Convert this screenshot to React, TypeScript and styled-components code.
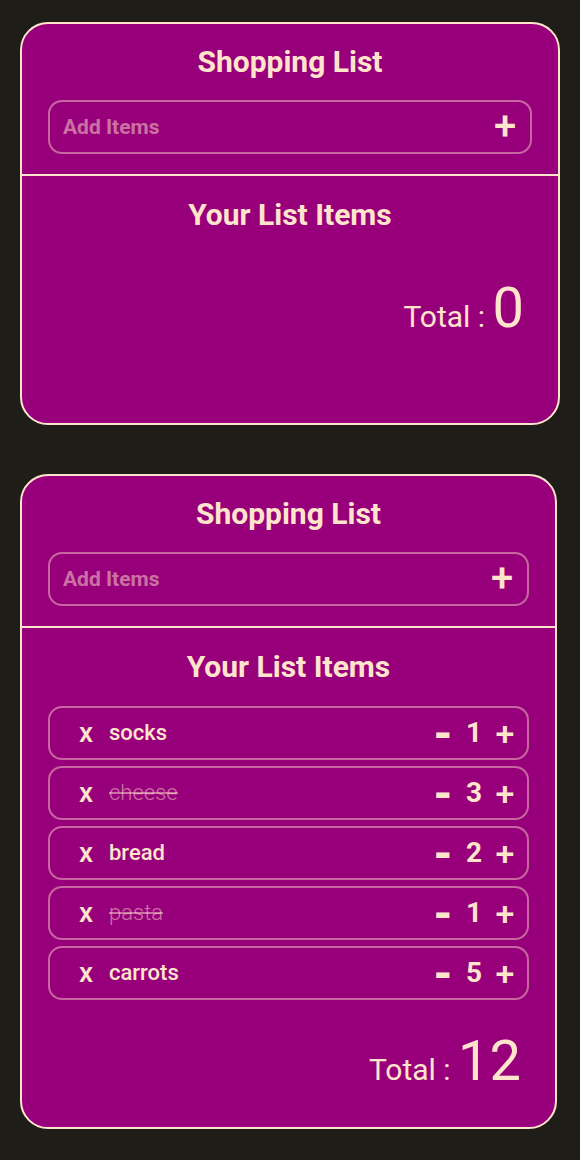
import React, { useState } from "react";
import styled, { createGlobalStyle } from "styled-components";

const cream = "#ffe4cc";
const creamFaded = "rgba(255, 228, 204, 0.5)";
const outline = "rgba(255, 228, 204, 0.45)";
const purple = "#98007b";

const GlobalStyle = createGlobalStyle`
  * { box-sizing: border-box; }
  body {
    margin: 0;
    background: #1e1d18;
    color: ${cream};
    font-family: Roboto, "Liberation Sans", sans-serif;
  }
`;

const Page = styled.main`
  display: flex;
  flex-direction: column;
  gap: 49px;
  padding: 22px 20px 30px;
`;

const Card = styled.section<{ $inset?: boolean }>`
  display: flex;
  flex-direction: column;
  min-height: 403px;
  margin-right: ${(p) => (p.$inset ? "3px" : "0")};
  border: 2px solid ${cream};
  border-radius: 28px;
  background: ${purple};
  overflow: hidden;
`;

const CardHeader = styled.header`
  padding: 20px 26px;
  border-bottom: 2px solid ${cream};
`;

const CardBody = styled.div`
  padding: 21px 26px 24px;
`;

const Title = styled.h2`
  margin: 0;
  font-size: 30px;
  line-height: 36px;
  font-weight: 700;
  text-align: center;
`;

const AddForm = styled.form`
  display: flex;
  align-items: center;
  height: 54px;
  margin-top: 20px;
  padding: 0 10px 0 13px;
  border: 2px solid ${outline};
  border-radius: 14px;
`;

const AddInput = styled.input`
  flex: 1;
  min-width: 0;
  padding: 0;
  border: 0;
  outline: 0;
  background: transparent;
  color: ${cream};
  font: 700 21px/30px Roboto, "Liberation Sans", sans-serif;
  &::placeholder {
    color: ${creamFaded};
    opacity: 1;
  }
`;

const GlyphButton = styled.button<{ $size: number; $weight: number }>`
  width: 30px;
  height: 40px;
  padding: 0;
  border: 0;
  background: transparent;
  color: ${cream};
  font-family: inherit;
  font-size: ${(p) => p.$size}px;
  line-height: 38px;
  font-weight: ${(p) => p.$weight};
  text-align: center;
  cursor: pointer;
`;

const List = styled.ul`
  display: flex;
  flex-direction: column;
  gap: 6px;
  margin: 21px 0 0;
  padding: 0;
  list-style: none;
`;

const Row = styled.li`
  display: flex;
  align-items: center;
  height: 54px;
  padding: 0 7px 0 21px;
  border: 2px solid ${outline};
  border-radius: 14px;
`;

const ItemName = styled.span<{ $done: boolean }>`
  flex: 1;
  margin-left: 8px;
  font-size: 22px;
  line-height: 30px;
  font-weight: ${(p) => (p.$done ? 300 : 500)};
  color: ${(p) => (p.$done ? creamFaded : cream)};
  text-decoration: ${(p) => (p.$done ? "line-through" : "none")};
`;

const Quantity = styled.span`
  width: 32px;
  font-size: 28px;
  line-height: 40px;
  font-weight: 700;
  text-align: center;
`;

const Total = styled.p<{ $spaced: boolean }>`
  margin: ${(p) => (p.$spaced ? "42px" : "28px")} 8px 0;
  font-size: 30px;
  line-height: 66px;
  text-align: right;
`;

const TotalValue = styled.span`
  font-size: 56px;
`;

type Item = { name: string; count: number; done: boolean };

function ShoppingList({ initial, inset }: { initial: Item[]; inset?: boolean }) {
  const [items, setItems] = useState(initial);
  const [draft, setDraft] = useState("");
  const total = items.reduce((sum, item) => sum + item.count, 0);

  const change = (index: number, step: number) =>
    setItems(
      items.map((item, i) =>
        i === index ? { ...item, count: Math.max(0, item.count + step) } : item
      )
    );

  const add = (event: React.FormEvent) => {
    event.preventDefault();
    if (!draft.trim()) return;
    setItems([...items, { name: draft.trim(), count: 1, done: false }]);
    setDraft("");
  };

  return (
    <Card $inset={inset}>
      <CardHeader>
        <Title>Shopping List</Title>
        <AddForm onSubmit={add}>
          <AddInput
            aria-label="Add Items"
            placeholder="Add Items"
            value={draft}
            onChange={(e) => setDraft(e.target.value)}
          />
          <GlyphButton type="submit" aria-label="Add" $size={40} $weight={500}>
            +
          </GlyphButton>
        </AddForm>
      </CardHeader>
      <CardBody>
        <Title>Your List Items</Title>
        {items.length > 0 && (
          <List>
            {items.map((item, i) => (
              <Row key={item.name}>
                <GlyphButton
                  type="button"
                  aria-label={`Remove ${item.name}`}
                  $size={28}
                  $weight={500}
                  onClick={() => setItems(items.filter((_, n) => n !== i))}
                >
                  x
                </GlyphButton>
                <ItemName $done={item.done}>{item.name}</ItemName>
                <GlyphButton
                  type="button"
                  aria-label={`Fewer ${item.name}`}
                  $size={46}
                  $weight={800}
                  onClick={() => change(i, -1)}
                >
                  -
                </GlyphButton>
                <Quantity>{item.count}</Quantity>
                <GlyphButton
                  type="button"
                  aria-label={`More ${item.name}`}
                  $size={34}
                  $weight={500}
                  onClick={() => change(i, 1)}
                >
                  +
                </GlyphButton>
              </Row>
            ))}
          </List>
        )}
        <Total $spaced={items.length === 0}>
          Total : <TotalValue>{total}</TotalValue>
        </Total>
      </CardBody>
    </Card>
  );
}

const groceries: Item[] = [
  { name: "socks", count: 1, done: false },
  { name: "cheese", count: 3, done: true },
  { name: "bread", count: 2, done: false },
  { name: "pasta", count: 1, done: true },
  { name: "carrots", count: 5, done: false },
];

export default function App() {
  return (
    <>
      <GlobalStyle />
      <Page>
        <ShoppingList initial={[]} />
        <ShoppingList initial={groceries} inset />
      </Page>
    </>
  );
}
